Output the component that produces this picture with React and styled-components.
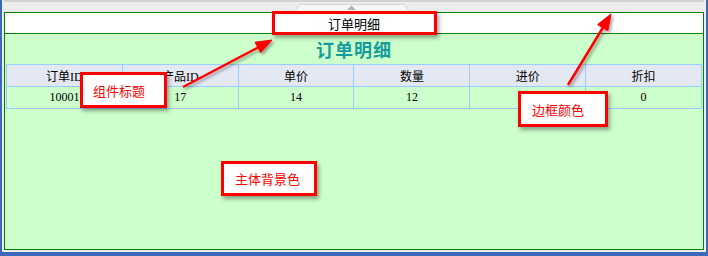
import React from "react";
import styled, { createGlobalStyle } from "styled-components";

const GlobalStyle = createGlobalStyle`
  html, body {
    margin: 0;
    padding: 0;
    background: #ececec;
  }
  body {
    font-family: "Liberation Serif", "Noto Sans CJK SC", serif;
  }
`;

const Screen = styled.div`
  position: relative;
  width: 708px;
  height: 256px;
  overflow: hidden;
`;

const Window = styled.div`
  box-sizing: border-box;
  width: 708px;
  height: 256px;
  display: flex;
  flex-direction: column;
  border-left: 2px solid #3b68b8;
  border-right: 2px solid #3b68b8;
  border-bottom: 4px solid #3b68b8;
  background: #ececec;
  padding: 0 2px 2px 2px;
`;

const TopBar = styled.div`
  height: 12px;
  flex: none;
  border-top: 2px solid #d2d2d2;
  box-sizing: border-box;
  display: flex;
  justify-content: center;
  align-items: flex-end;
  padding-right: 4px;
`;

const Panel = styled.div`
  flex: 1;
  display: flex;
  flex-direction: column;
  border: 1px solid #008000;
  background: #ccffcc;
`;

const PanelHeader = styled.div`
  height: 20px;
  flex: none;
  background: #ffffff;
  border-bottom: 1px solid #008000;
  display: flex;
  align-items: center;
  justify-content: center;
  font-family: "Noto Sans CJK SC", sans-serif;
  font-size: 13px;
  color: #000;
`;

const Title = styled.div`
  height: 30px;
  display: flex;
  align-items: center;
  justify-content: center;
  font-family: "Noto Sans CJK SC", sans-serif;
  font-size: 18px;
  font-weight: bold;
  letter-spacing: 1px;
  color: #159c9c;
`;

const Table = styled.table`
  width: calc(100% - 2px);
  margin: 0 auto;
  border-collapse: collapse;
  table-layout: fixed;
  font-size: 12px;
`;

const Th = styled.th`
  height: 21px;
  padding: 0;
  border: 1px solid #99ccff;
  background: #e4e8f2;
  font-weight: normal;
  color: #000;
`;

const Td = styled.td`
  height: 21px;
  padding: 0;
  border: 1px solid #99ccff;
  text-align: center;
  color: #000;
`;

const Overlay = styled.div`
  position: absolute;
  inset: 0;
  pointer-events: none;
`;

const Note = styled.div`
  position: absolute;
  box-sizing: border-box;
  left: ${(p) => p.x}px;
  top: ${(p) => p.y}px;
  width: ${(p) => p.w}px;
  height: ${(p) => p.h}px;
  border: 3px solid #ff0000;
  background: ${(p) => (p.clear ? "transparent" : "#ffffff")};
  box-shadow: 2px 3px 4px rgba(0, 0, 0, 0.35);
  padding-left: ${(p) => p.pad || 10}px;
  display: flex;
  align-items: center;
  font-family: "Noto Sans CJK SC", sans-serif;
  font-size: 13px;
  color: #ff0000;
`;

const Arrows = styled.svg`
  position: absolute;
  left: 0;
  top: 0;
`;

const Tab = () => (
  <svg width="116" height="8" viewBox="0 0 116 8">
    <path d="M0 8 L6 0.5 L110 0.5 L116 8 Z" fill="#f7f7f7" stroke="#d6d6d6" />
    <path d="M53 6 L57.5 1.5 L62 6 Z" fill="#b4b4b4" />
  </svg>
);

const columns = ["订单ID", "产品ID", "单价", "数量", "进价", "折扣"];
const row = ["10001", "17", "14", "12", "10", "0"];

const App = () => {
  return (
    <Screen>
      <GlobalStyle />
      <Window>
        <TopBar>
          <Tab />
        </TopBar>
        <Panel>
          <PanelHeader>订单明细</PanelHeader>
          <Title>订单明细</Title>
          <Table>
            <thead>
              <tr>
                {columns.map((c) => (
                  <Th key={c}>{c}</Th>
                ))}
              </tr>
            </thead>
            <tbody>
              <tr>
                {row.map((v, i) => (
                  <Td key={i}>{v}</Td>
                ))}
              </tr>
            </tbody>
          </Table>
        </Panel>
      </Window>

      <Overlay>
        <Note x={272} y={11} w={165} h={24} clear />
        <Note x={80} y={72} w={87} h={36}>组件标题</Note>
        <Note x={518} y={91} w={90} h={36} pad={11}>边框颜色</Note>
        <Note x={221} y={161} w={96} h={35} pad={11}>主体背景色</Note>
        <Arrows width="708" height="256" viewBox="0 0 708 256">
          <defs>
            <filter id="sh" x="-20%" y="-20%" width="140%" height="140%">
              <feDropShadow dx="2" dy="2" stdDeviation="1.5" floodColor="#000" floodOpacity="0.35" />
            </filter>
          </defs>
          <g filter="url(#sh)" fill="#ff0000" stroke="#ff0000">
            <line x1="183" y1="87" x2="258" y2="47.5" strokeWidth="2.5" />
            <polygon points="272,40 260.6,52.8 255,42.2" strokeWidth="1" />
            <line x1="568" y1="85" x2="603" y2="27.5" strokeWidth="2.5" />
            <polygon points="611,14 607.8,30.8 597.6,24.6" strokeWidth="1" />
          </g>
        </Arrows>
      </Overlay>
    </Screen>
  );
};

export default App;
